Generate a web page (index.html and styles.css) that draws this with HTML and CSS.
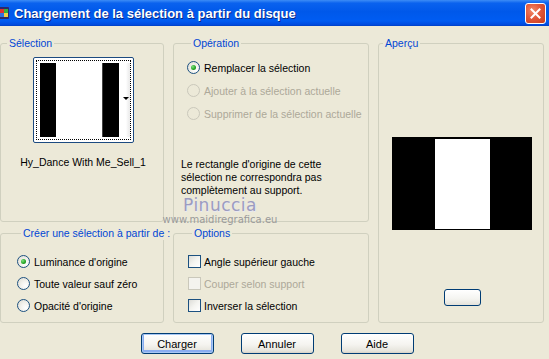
FILE: index.html
```html
<!DOCTYPE html>
<html lang="fr">

<head>
    <meta charset="UTF-8">
    <title>Chargement de la sélection à partir du disque</title>
    <link rel="stylesheet" href="styles.css">
</head>

<body>

    <div class="window">
        <div class="titlebar">
            <span class="app-icon">
                <svg width="11" height="14" viewBox="0 0 11 14">
                    <rect x="0" y="1" width="10" height="12" rx="1" fill="#2a2a6a" />
                    <rect x="1" y="3" width="4" height="4" fill="#e03030" />
                    <rect x="5" y="3" width="4" height="4" fill="#30b040" />
                    <rect x="1" y="7" width="4" height="4" fill="#3070e0" />
                    <rect x="5" y="7" width="4" height="4" fill="#f0d040" />
                </svg>
            </span>
            <span class="title">Chargement de la sélection à partir du disque</span>
            <span class="close-btn">
                <svg width="11" height="11" viewBox="0 0 11 11">
                    <path d="M1.5 1.5 L9.5 9.5 M9.5 1.5 L1.5 9.5" stroke="#fff" stroke-width="2" stroke-linecap="square" />
                </svg>
            </span>
        </div>

        <div class="body">
            <div class="panels">
                <fieldset class="group sel-group">
                    <legend>Sélection</legend>
                    <div class="thumb">
                        <div class="thumb-focus">
                            <div class="thumb-img"></div>
                            <span class="thumb-arrow"></span>
                        </div>
                    </div>
                    <div class="thumb-name">Hy_Dance With Me_Sell_1</div>
                </fieldset>

                <fieldset class="group op-group">
                    <legend>Opération</legend>
                    <div class="choice-list">
                        <div class="choice"><span class="radio checked"></span>Remplacer la sélection</div>
                        <div class="choice disabled"><span class="radio"></span>Ajouter à la sélection actuelle</div>
                        <div class="choice disabled"><span class="radio"></span>Supprimer de la sélection actuelle</div>
                    </div>
                    <p class="op-note">Le rectangle d'origine de cette<br>sélection ne correspondra pas<br>complètement au support.</p>
                </fieldset>

                <fieldset class="group preview-group">
                    <legend>Aperçu</legend>
                    <div class="preview"></div>
                    <div class="zoom-btn"></div>
                </fieldset>

                <fieldset class="group create-group">
                    <legend>Créer une sélection à partir de :</legend>
                    <div class="choice-list loose">
                        <div class="choice"><span class="radio checked"></span>Luminance d'origine</div>
                        <div class="choice"><span class="radio"></span>Toute valeur sauf zéro</div>
                        <div class="choice"><span class="radio"></span>Opacité d'origine</div>
                    </div>
                </fieldset>

                <fieldset class="group options-group">
                    <legend>Options</legend>
                    <div class="choice-list loose">
                        <div class="choice"><span class="check"></span>Angle supérieur gauche</div>
                        <div class="choice disabled"><span class="check"></span>Couper selon support</div>
                        <div class="choice"><span class="check"></span>Inverser la sélection</div>
                    </div>
                </fieldset>
            </div>

            <div class="actions">
                <button class="btn default">Charger</button>
                <button class="btn">Annuler</button>
                <button class="btn">Aide</button>
            </div>

            <div class="watermark">
                <div class="wm-name">Pinuccia</div>
                <div class="wm-url">www.maidiregrafica.eu</div>
            </div>
        </div>
    </div>

</body>

</html>
```

FILE: styles.css
```css
* {
    box-sizing: border-box;
}

body {
    margin: 0;
    padding: 0;
    font-family: 'Liberation Sans', Arial, sans-serif;
    font-size: 10.5px;
    color: #000;
    background-color: #ece9d8;
    overflow: hidden;
}

.window {
    width: 549px;
    height: 359px;
    background-color: #ece9d8;
}

/* title bar */

.titlebar {
    height: 26px;
    display: flex;
    align-items: center;
    background: linear-gradient(to bottom, #3d8cf6 0%, #0a62ee 12%, #0058ea 45%, #005cf2 80%, #004ce0 94%, #003fc4 100%);
    color: #fff;
}

.app-icon {
    width: 11px;
    height: 14px;
    margin-left: -1px;
    display: flex;
}

.title {
    margin-left: 4px;
    font-family: 'Liberation Sans Narrow', 'Liberation Sans', Arial, sans-serif;
    font-weight: bold;
    font-size: 13px;
    text-shadow: 1px 1px 0 #0a2a88;
}

.close-btn {
    margin-left: auto;
    margin-right: 3px;
    width: 21px;
    height: 21px;
    border: 1px solid #fff;
    border-radius: 3px;
    background: radial-gradient(circle at 35% 35%, #f08a6a 0%, #e2583a 45%, #c63c1c 100%);
    display: flex;
    align-items: center;
    justify-content: center;
}

/* panels */

.body {
    position: relative;
    padding-top: 11px;
}

.panels {
    display: grid;
    grid-template-columns: 164px 196px 166px;
    grid-template-rows: 185px 96px;
    column-gap: 9px;
    row-gap: 5px;
}

.group {
    margin: 0;
    padding: 0;
    min-width: 0;
    border: 1px solid #d0d0bf;
    border-radius: 3px;
}

.group legend {
    margin-left: 4px;
    padding: 0 2px;
    color: #0046d5;
    line-height: 13px;
    white-space: nowrap;
}

.sel-group {
    display: flex;
    flex-direction: column;
    align-items: center;
    padding-top: 7px;
    padding-left: 2px;
}

.op-group {
    padding: 11px 0 0 13px;
}

.preview-group {
    grid-column: 3;
    grid-row: 1 / span 2;
    display: flex;
    flex-direction: column;
    align-items: center;
    padding-top: 87px;
}

.create-group {
    grid-column: 1;
    grid-row: 2;
    padding: 15px 0 0 16px;
}

.options-group {
    grid-column: 2;
    grid-row: 2;
    padding: 15px 0 0 14px;
}

/* selection thumbnail */

.thumb {
    width: 101px;
    height: 86px;
    border: 1px solid #1c4a80;
    border-radius: 2px;
    padding: 2px;
    background-color: #fff;
}

.thumb-focus {
    position: relative;
    height: 100%;
    border: 1px dotted #000;
    padding: 2px 0 2px 3px;
}

.thumb-img {
    height: 100%;
    background: linear-gradient(to right,
            #000 0, #000 16px,
            #fff 16px, #fff 62px,
            #888 62px, #000 63px, #000 79px,
            #fff 79px, #fff 86px,
            #f2f2f2 88px, #e6e6e6 92px);
}

.thumb-arrow {
    position: absolute;
    right: 1px;
    top: 36px;
    border-left: 3px solid transparent;
    border-right: 3px solid transparent;
    border-top: 3px solid #000;
}

.thumb-name {
    margin-top: 13px;
    line-height: 13px;
}

/* radios, checkboxes */

.choice-list {
    display: flex;
    flex-direction: column;
    gap: 10px;
}

.choice-list.loose {
    gap: 9px;
}

.choice {
    display: flex;
    align-items: center;
    height: 13px;
    white-space: nowrap;
}

.choice.disabled {
    color: #aca899;
}

.radio {
    width: 13px;
    height: 13px;
    margin-right: 4px;
    border: 1px solid #1c5180;
    border-radius: 50%;
    background: radial-gradient(circle at 70% 70%, #ffffff 0%, #f4f3ee 40%, #dcdad0 100%);
    display: flex;
    align-items: center;
    justify-content: center;
}

.radio.checked::after {
    content: '';
    width: 5px;
    height: 5px;
    border-radius: 50%;
    background: radial-gradient(circle at 35% 35%, #7ee27e 0%, #21a121 60%, #1a861a 100%);
}

.choice.disabled .radio {
    border-color: #cac8bb;
    background: #ece9d8;
}

.check {
    width: 13px;
    height: 13px;
    margin-right: 3px;
    border: 1px solid #1c5180;
    background: linear-gradient(135deg, #dcdcd7 0%, #f4f4f0 50%, #ffffff 100%);
}

.choice.disabled .check {
    border-color: #cac8bb;
    background: #f4f3ee;
}

.op-note {
    margin: 38px 0 0 -6px;
    line-height: 13px;
}

/* preview */

.preview {
    width: 140px;
    height: 93px;
    margin-left: 2px;
    background: linear-gradient(to right, #000 0, #000 43px, #fff 43px, #fff 98px, #000 98px);
    border-top: 2px solid #000;
    border-bottom: 1px solid #000;
}

.zoom-btn {
    width: 37px;
    height: 17px;
    margin-top: 59px;
    margin-left: 3px;
    border: 1px solid #003c74;
    border-radius: 3px;
    background: linear-gradient(to bottom, #ffffff 0%, #f4f4f0 60%, #e4e2da 100%);
}

/* buttons */

.actions {
    display: flex;
    justify-content: center;
    gap: 27px;
    margin-top: 10px;
    padding-left: 5px;
}

.btn {
    width: 73px;
    height: 21px;
    padding: 0;
    border: 1px solid #003c74;
    border-radius: 3px;
    background: linear-gradient(to bottom, #ffffff 0%, #f5f4f0 55%, #e6e4dc 90%, #d6d0c5 100%);
    font-family: 'Liberation Sans', Arial, sans-serif;
    font-size: 11px;
    color: #000;
}

.btn.default {
    box-shadow: inset 0 0 0 1px #a8c8f4, inset 0 -1px 0 2px #89adf0;
}

/* watermark */

.watermark {
    position: absolute;
    left: 160px;
    top: 170px;
    text-align: center;
    width: 120px;
    pointer-events: none;
}

.wm-name {
    font-family: 'DejaVu Sans', sans-serif;
    font-size: 17px;
    letter-spacing: 0.5px;
    color: #9c9cc0;
    line-height: 18px;
    text-shadow: 1px 1px 0 #e8e8f0;
}

.wm-url {
    font-family: 'DejaVu Sans', sans-serif;
    font-size: 10px;
    color: #9a9a9a;
    line-height: 12px;
}
```
